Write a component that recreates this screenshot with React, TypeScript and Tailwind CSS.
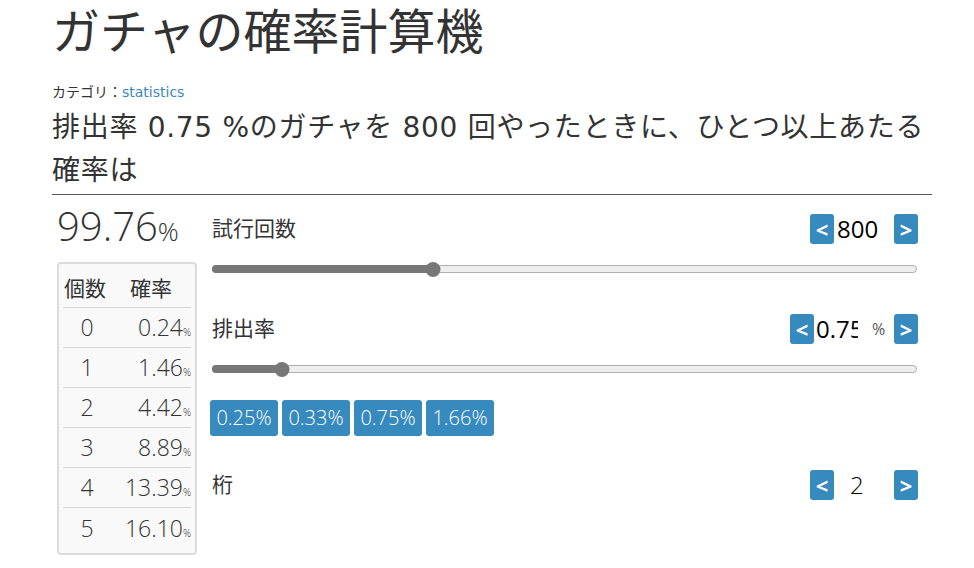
import React from 'react';

const jp = "font-['Noto_Sans_CJK_JP',sans-serif]";
const wide = "font-['DejaVu_Sans','Noto_Sans_CJK_JP',sans-serif]";
const num = "font-['Open_Sans','Noto_Sans_CJK_JP',sans-serif]";

const rows = [
  ['0', '0.24'],
  ['1', '1.46'],
  ['2', '4.42'],
  ['3', '8.89'],
  ['4', '13.39'],
  ['5', '16.10'],
];

function Arrow({ dir }: { dir: '<' | '>' }) {
  return (
    <button className={`flex h-[30px] w-[24px] items-center justify-center rounded-[3px] bg-[#378abe] text-[22px] font-bold leading-none text-white ${num}`}>
      {dir}
    </button>
  );
}

function Slider({ pct }: { pct: number }) {
  return (
    <div className="relative flex h-[16px] w-[705px] items-center">
      <div className="h-[8px] w-full rounded-full border border-[#b0b0b0] bg-[#eeeeee]" />
      <div className="absolute left-0 h-[8px] rounded-l-full bg-[#777777]" style={{ width: `${pct}%` }} />
      <div
        className="absolute h-[15px] w-[15px] -translate-x-1/2 rounded-full bg-[#777777]"
        style={{ left: `${pct}%` }}
      />
    </div>
  );
}

export default function App() {
  return (
    <div className={`min-h-[568px] bg-white text-[#333] ${jp}`}>
      <div className="ml-[52px] w-[880px]">
        <h1 className="pt-[2px] text-[48px] font-normal leading-[53px]">ガチャの確率計算機</h1>
        <div className={`mt-[28px] text-[14px] leading-[18px] ${wide}`}>
          カテゴリ：<span className="text-[#3a87c4]">statistics</span>
        </div>
        <h2 className={`mt-[5px] border-b border-[#555] pb-[2px] text-[28px] font-normal leading-[43px] tracking-[0.7px] ${wide}`}>
          排出率 0.75 %のガチャを 800 回やったときに、ひとつ以上あたる確率は
        </h2>

        <div className="flex">
          {/* left: result + table */}
          <div className="w-[160px] pl-[5px]">
            <div className={`mt-[7px] flex items-baseline leading-[48px] ${num}`}>
              <span className="text-[40px] font-light">99.76</span>
              <span className="text-[26px] font-light">%</span>
            </div>
            <div className="mt-[7px] w-[140px] rounded-[4px] border-2 border-[#dcdcdc] bg-[#f9f9f9] px-[4px] pb-[5px]">
              <div className="flex h-[44px] items-end border-b border-[#d6d6d6] pb-[6px] text-[21px] leading-[28px]">
                <span className="w-[48px] pl-[1px]">個数</span>
                <span className="flex-1 text-center">確率</span>
              </div>
              {rows.map(([n, p]) => (
                <div
                  key={n}
                  className={`flex h-[40px] items-center text-[23px] font-light ${num} ${n === '5' ? '' : 'border-b border-[#d6d6d6]'}`}
                >
                  <span className="w-[48px] text-center">{n}</span>
                  <span className="flex-1 text-right">
                    {p}
                    <span className="text-[10px]">%</span>
                  </span>
                </div>
              ))}
            </div>
          </div>

          {/* right: controls */}
          <div className="pt-[19px]">
            <div className="flex h-[30px] w-[706px] items-center justify-between">
              <span className="-mt-[3px] text-[21px]">試行回数</span>
              <div className="flex items-center">
                <Arrow dir="<" />
                <span className={`w-[60px] pl-[3px] text-[24px] text-black ${num}`}>800</span>
                <Arrow dir=">" />
              </div>
            </div>
            <div className="mt-[17px]">
              <Slider pct={31.3} />
            </div>

            <div className="mt-[37px] flex h-[30px] w-[706px] items-center justify-between">
              <span className="-mt-[3px] text-[21px]">排出率</span>
              <div className="flex items-center">
                <Arrow dir="<" />
                <span className={`w-[44px] overflow-hidden whitespace-nowrap pl-[2px] text-[24px] text-black ${num}`}>0.75</span>
                <span className={`w-[36px] pl-[14px] text-[16px] text-[#555] ${num}`}>%</span>
                <Arrow dir=">" />
              </div>
            </div>
            <div className="mt-[17px]">
              <Slider pct={9.9} />
            </div>

            <div className="-ml-[2px] mt-[23px] flex gap-[4px]">
              {['0.25%', '0.33%', '0.75%', '1.66%'].map((v) => (
                <button
                  key={v}
                  className={`h-[36px] w-[68px] rounded-[3px] bg-[#378abe] text-[20px] font-light text-white ${num}`}
                >
                  {v}
                </button>
              ))}
            </div>

            <div className="mt-[34px] flex h-[30px] w-[706px] items-center justify-between">
              <span className="-mt-[3px] text-[21px]">桁</span>
              <div className="flex items-center">
                <Arrow dir="<" />
                <span className={`w-[60px] pl-[16px] text-[24px] font-light text-black ${num}`}>2</span>
                <Arrow dir=">" />
              </div>
            </div>
          </div>
        </div>
      </div>
    </div>
  );
}
